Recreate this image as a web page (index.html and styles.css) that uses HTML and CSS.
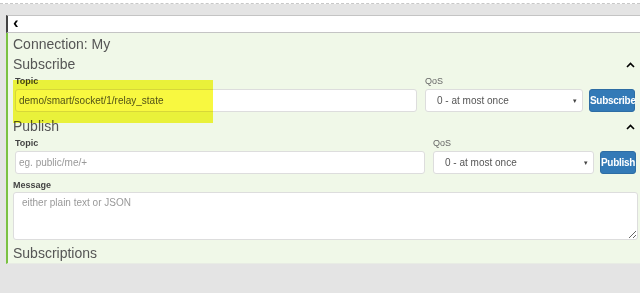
FILE: index.html
```html
<!DOCTYPE html>
<html lang="en">
<head>
  <meta charset="UTF-8">
  <title>MQTT Client</title>
  <link rel="stylesheet" href="styles.css">
</head>
<body>

  <div class="topline"></div>

  <div class="panel">
    <div class="panel-head">
      <span class="back">&#8249;</span>
    </div>

    <div class="panel-body">
      <div class="conn-title">Connection: My</div>

      <div class="section-head">
        <span>Subscribe</span>
        <svg class="chev" width="9" height="6" viewBox="0 0 9 6"><path d="M1 5 L4.5 1.5 L8 5" fill="none" stroke="#000" stroke-width="1.6"/></svg>
      </div>
      <div class="row sub-row">
        <div class="field grow">
          <label>Topic</label>
          <input type="text" value="demo/smart/socket/1/relay_state">
        </div>
        <div class="field qos">
          <label>QoS</label>
          <div class="select">0 - at most once <span class="caret">&#9662;</span></div>
        </div>
        <button class="btn">Subscribe</button>
        <div class="marker"></div>
      </div>

      <div class="section-head pub-head">
        <span>Publish</span>
        <svg class="chev" width="9" height="6" viewBox="0 0 9 6"><path d="M1 5 L4.5 1.5 L8 5" fill="none" stroke="#000" stroke-width="1.6"/></svg>
      </div>
      <div class="row pub-row">
        <div class="field grow">
          <label>Topic</label>
          <input type="text" placeholder="eg. public/me/+">
        </div>
        <div class="field qos">
          <label>QoS</label>
          <div class="select">0 - at most once <span class="caret">&#9662;</span></div>
        </div>
        <button class="btn">Publish</button>
      </div>

      <div class="field msg">
        <label>Message</label>
        <textarea placeholder="either plain text or JSON"></textarea>
      </div>

      <div class="subs-title">Subscriptions</div>
    </div>
  </div>

</body>
</html>
```

FILE: styles.css
```css
body {
  margin: 0;
  font-family: "Liberation Sans", Arial, sans-serif;
  background: #e4e4e4;
  color: #555;
}

.topline {
  height: 3px;
  background: #fff;
  border-bottom: 1px dashed #c8c8c8;
  margin-bottom: 11px;
}

.panel {
  margin-left: 6px;
}

.panel-head {
  height: 16px;
  background: #fff;
  border-top: 1px solid #c4c4c4;
  border-bottom: 1px solid #c4c4c4;
  border-left: 2px solid #444;
  padding-left: 5px;
  display: flex;
  align-items: center;
}

.back {
  font-size: 17px;
  font-weight: bold;
  color: #000;
  line-height: 16px;
  margin-top: -2px;
}

.panel-body {
  background: #f0f8e8;
  border-left: 2px solid #7ac142;
  padding: 0 2px 2px 5px;
  height: 228px;
  border-bottom: 1px solid #e8ece4;
}

.conn-title {
  font-size: 14px;
  line-height: 20px;
  padding-top: 1px;
}

.section-head {
  display: flex;
  justify-content: space-between;
  align-items: center;
  font-size: 14px;
  line-height: 20px;
  padding-right: 3px;
}

.chev {
  margin-top: 2px;
}

.row {
  display: flex;
  align-items: flex-end;
  position: relative;
  margin-top: 2px;
  padding-left: 2px;
}

.field label {
  display: block;
  font-size: 9px;
  font-weight: bold;
  color: #444;
  line-height: 10px;
  margin-bottom: 3px;
}

.grow {
  flex: 1;
  min-width: 0;
}

.field input,
.field textarea {
  box-sizing: border-box;
  width: 100%;
  height: 23px;
  border: 1px solid #ddd;
  border-radius: 3px;
  background: #fff;
  font-family: inherit;
  font-size: 10px;
  color: #555;
  padding: 0 3px;
}

.field input::placeholder,
.field textarea::placeholder {
  color: #999;
}

.qos {
  flex-shrink: 0;
  width: 158px;
  margin-left: 8px;
}

.qos label {
  font-weight: normal;
  color: #666;
}

.pub-row .qos {
  width: 161px;
}

.select {
  box-sizing: border-box;
  height: 23px;
  border: 1px solid #ddd;
  border-radius: 3px;
  background: #fff;
  font-size: 10px;
  color: #555;
  padding: 0 5px 0 11px;
  display: flex;
  align-items: center;
  justify-content: space-between;
}

.caret {
  font-size: 7px;
  color: #444;
}

.btn {
  flex-shrink: 0;
  height: 23px;
  margin-left: 6px;
  background: #337ab7;
  border: 1px solid #2e6da4;
  border-radius: 3px;
  color: #fff;
  font-family: inherit;
  font-size: 10px;
  font-weight: bold;
  letter-spacing: -0.3px;
  padding: 0;
  width: 46px;
  margin-right: 3px;
}

.pub-row .btn {
  width: 36px;
  margin-right: 2px;
}

.marker {
  position: absolute;
  left: 0;
  top: 4px;
  width: 200px;
  height: 43px;
  background: #f8f840;
  mix-blend-mode: multiply;
  pointer-events: none;
}

.pub-head {
  margin-top: 4px;
}

.msg {
  margin-top: 6px;
}

.msg label {
  margin-bottom: 2px;
}

.msg textarea {
  height: 48px;
  padding: 4px 8px;
  resize: vertical;
  display: block;
}

.subs-title {
  font-size: 14px;
  line-height: 20px;
  margin-top: 3px;
}
```
